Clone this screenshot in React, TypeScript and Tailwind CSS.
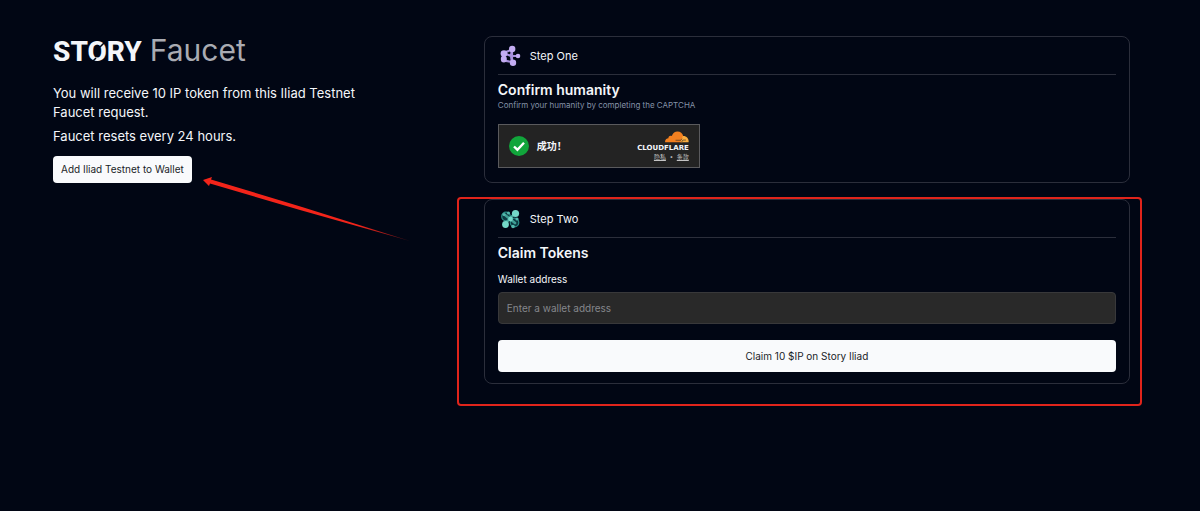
import type { ReactNode } from 'react'

function StepOneIcon() {
  return (
    <svg viewBox="0 0 24 24" className="h-6 w-6 shrink-0" aria-hidden="true">
      <g stroke="#a78fdd" strokeWidth="2.200" fill="none" strokeLinecap="round">
        <path d="M5.500 9 14 5.500 14 18 6 16.500Z" />
        <path d="M14 5.500 13 12 14 18M13 12H20M5.500 9 13 12" />
      </g>
      <g fill="#c3acf2">
        <ellipse cx="6" cy="9.500" rx="3.400" ry="3.200" />
        <circle cx="14.200" cy="5" r="3.200" />
        <ellipse cx="5.800" cy="15" rx="3" ry="3.600" />
        <circle cx="15" cy="18.800" r="3.200" />
        <circle cx="20" cy="12" r="2.300" />
      </g>
    </svg>
  )
}

function StepTwoIcon() {
  return (
    <svg viewBox="0 0 24 24" className="h-6 w-6 shrink-0" aria-hidden="true">
      <g stroke="#2a8f88" strokeWidth="1.200" fill="#0c3a42">
        <circle cx="8" cy="9.500" r="4.300" />
        <circle cx="16.500" cy="15.500" r="4.300" />
      </g>
      <path d="M7 17 17 6M7 8l10 8" stroke="#3f9f95" strokeWidth="2.600" strokeLinecap="round" />
      <g fill="#74d8c8">
        <circle cx="17.500" cy="6.500" r="3.600" />
        <circle cx="7.500" cy="17.500" r="3.400" />
        <circle cx="12.500" cy="12" r="2.400" />
      </g>
      <g fill="#55b9ae">
        <circle cx="6" cy="7.500" r="1.600" />
        <circle cx="10.500" cy="6" r="1.500" />
        <circle cx="19" cy="12" r="1.600" />
        <circle cx="15" cy="19.500" r="1.800" />
      </g>
    </svg>
  )
}

function CloudIcon() {
  return (
    <svg viewBox="0 0 25 12" className="h-3 w-6" aria-hidden="true">
      <path
        d="M0 11.500C0 9 1.600 7.500 3.600 7.400 3.300 5.300 5.400 4 7.100 5 8.200 1.800 10.500.3 13 .3c3 0 5.300 2 6 4.700l-1 6.500Z"
        fill="#f38020"
      />
      <path d="M18.600 5c3.600-.3 6.400 2.500 6 6.500h-8.400Z" fill="#faad3f" />
      <path d="M11 9.400h5.500l1.200-1.700M17.300 11.400l1.300-2.200h3.200" stroke="#232323" strokeWidth=".6" fill="none" />
    </svg>
  )
}

function StepCard({ icon, label, children }: { icon: ReactNode; label: string; children: ReactNode }) {
  return (
    <section className="rounded-lg border border-[#2b2e3b] px-[13px]">
      <div className="flex h-[38px] items-center gap-2 border-b border-[#2b2e3b] pt-px">
        {icon}
        <span className="text-[11px]">{label}</span>
      </div>
      {children}
    </section>
  )
}

function Turnstile() {
  return (
    <div className="mt-[13px] mb-[14px] flex h-11 w-[202px] items-center border border-[#5a5a5d] bg-[#232323] px-[10px]">
      <svg viewBox="0 0 20 20" className="h-5 w-5" aria-hidden="true">
        <circle cx="10" cy="10" r="10" fill="#11a53b" />
        <path d="m5 10.500 3.400 3.200 6.600-7" stroke="#fff" strokeWidth="2.400" fill="none" />
      </svg>
      <span className="ml-2 text-[10px] font-bold">成功！</span>
      <div className="ml-auto flex flex-col items-end">
        <CloudIcon />
        <span className="mt-px font-['DejaVu_Sans',sans-serif] text-[7px] leading-[8px] font-bold">CLOUDFLARE</span>
        <span className="mt-px flex gap-1 text-[6px] leading-[8px] text-[#c4c4c4]">
          <a href="#privacy" className="underline">隐私</a>
          <span className="font-bold">•</span>
          <a href="#terms" className="underline">条款</a>
        </span>
      </div>
    </div>
  )
}

export default function App() {
  return (
    <main className="relative min-h-screen bg-[#010614] pt-9 pr-[70px] pb-9 pl-[53px] font-['Inter','Noto_Sans_CJK_SC',sans-serif] text-[#f4f6fa]">
      <div className="grid grid-cols-[2fr_3fr]">
        <div>
          <h1 className="flex h-[30px] items-baseline gap-2 text-[28px] leading-[28px]">
            <span className="relative font-['Roboto',sans-serif] font-extrabold">
              STORY
              {/* diagonal cuts through the O */}
              <svg viewBox="0 0 20 30" className="absolute top-0 left-[34px] h-[30px] w-5" aria-hidden="true">
                <path d="M13 9 19 3M3 26l6-6" stroke="#010614" strokeWidth="1.500" />
              </svg>
            </span>
            <span className="text-[30px] font-normal text-[#a9abb2]">Faucet</span>
          </h1>
          <div className="mt-[18px] max-w-[330px] space-y-[5px] text-[13px] leading-[19px]">
            <p>You will receive 10 IP token from this Iliad Testnet Faucet request.</p>
            <p>Faucet resets every 24 hours.</p>
          </div>
          <button
            type="button"
            className="mt-[10px] h-[27px] rounded bg-[#f9fafc] px-2 text-[10px] text-[#1a1d28]"
          >
            Add Iliad Testnet to Wallet
          </button>
        </div>

        <div className="space-y-4">
          <StepCard icon={<StepOneIcon />} label="Step One">
            <h2 className="mt-[6px] text-[14px] leading-[18px] font-semibold">Confirm humanity</h2>
            <p className="text-[8px] leading-[12px] text-[#8592a8]">
              Confirm your humanity by completing the CAPTCHA
            </p>
            <Turnstile />
          </StepCard>

          <div className="relative">
            <StepCard icon={<StepTwoIcon />} label="Step Two">
              <form>
                <h2 className="mt-[6px] text-[14px] leading-[18px] font-semibold">Claim Tokens</h2>
                <label htmlFor="wallet" className="mt-[10px] block text-[10px] leading-[14px]">
                  Wallet address
                </label>
                <input
                  id="wallet"
                  type="text"
                  placeholder="Enter a wallet address"
                  className="mt-[6px] block h-8 w-full rounded border border-[#38383a] bg-[#292929] px-2 text-[10px] placeholder:text-[#85878c]"
                />
                <button
                  type="button"
                  className="mt-4 mb-[11px] block h-8 w-full rounded bg-[#f9fafc] text-[10px] text-[#1a1d28]"
                >
                  Claim 10 $IP on Story Iliad
                </button>
              </form>
            </StepCard>
            <div className="pointer-events-none absolute -top-[2px] -right-[12px] -bottom-[22px] -left-[27px] rounded-sm border-2 border-[#e0241b]" />
          </div>
        </div>
      </div>

      <svg
        viewBox="0 0 210 66"
        className="pointer-events-none absolute top-[176px] left-[202px] h-[66px] w-[210px]"
        aria-hidden="true"
      >
        <defs>
          <linearGradient id="arrow" x1="0" x2="1">
            <stop offset=".75" stopColor="#f3241a" />
            <stop offset="1" stopColor="#f3241a" stopOpacity=".4" />
          </linearGradient>
        </defs>
        <path d="M1 4 10 1 9 3.500 100 31 208 65 98 34 8 7.500 7 10Z" fill="url(#arrow)" />
      </svg>
    </main>
  )
}
